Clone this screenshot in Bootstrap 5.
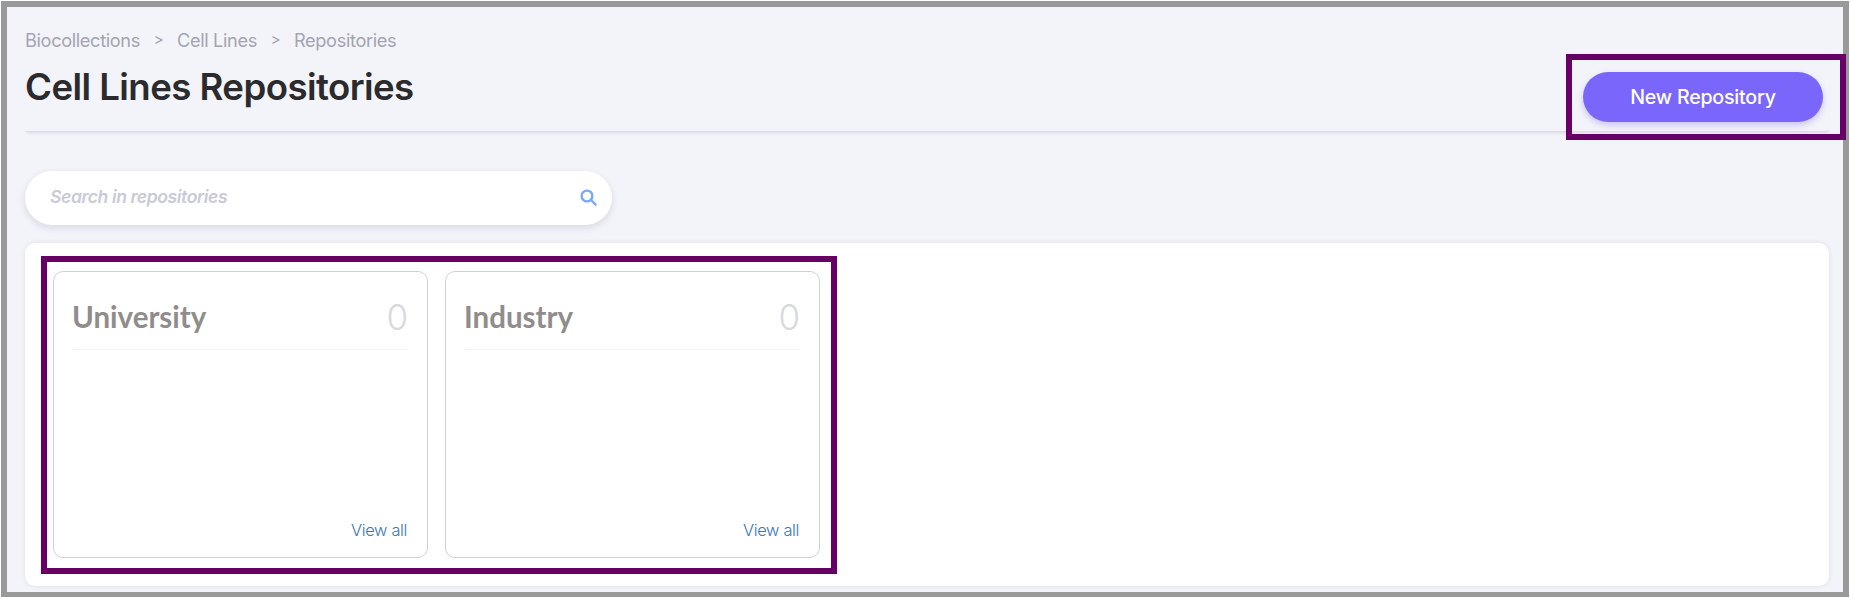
<!DOCTYPE html>
<html lang="en">
<head>
    <meta charset="UTF-8">
    <meta name="viewport" content="width=device-width, initial-scale=1.0">
    <title>Cell Lines Repositories</title>
    <link rel="stylesheet" href="https://cdn.jsdelivr.net/npm/bootstrap@5.3.0/dist/css/bootstrap.min.css">
    <style>
        html, body { height: 100%; }
        body { background: #fff; font-family: "Inter", "Liberation Sans", sans-serif; overflow: hidden; }
        .frame { position: relative; width: 1848px; height: 596px; margin: 1px 0 0 1px; border: solid #999; border-width: 6px 6px 5px 6px; background: #f3f4f9; padding: 0 14px 0 18px; }
        .page-head { height: 125px; border-bottom: 1px solid #dcdde2; box-shadow: 0 3px 3px -2px rgba(60, 60, 90, .12); }
        .crumbs { padding-top: 22px; font-size: 18.2px; line-height: 22px; color: #a3a4b1; letter-spacing: -.35px; }
        .crumb-sep { width: 37px; text-align: center; font-size: 15px; }
        .page-title { margin: 16px 0 0; font-size: 36.6px; line-height: 40px; font-weight: 600; color: #2b2a2c; letter-spacing: -.55px; }
        .new-btn { width: 240px; height: 50px; margin: 65px 6px 0 0; padding-top: 8px; border: 0; border-radius: 25px; background: #7b66fb; color: #fff; font-size: 19.6px; font-weight: 500; letter-spacing: -.2px; box-shadow: 0 3px 6px rgba(123, 102, 251, .35); }
        .btn-mark { position: absolute; left: 1559px; top: 47px; width: 280px; height: 86px; border: 6px solid #660066; pointer-events: none; }
        .search-box { width: 587px; height: 54px; margin-top: 39px; padding: 0 15px 0 25px; border-radius: 27px; background: #fff; box-shadow: 0 3px 7px rgba(60, 60, 90, .14); }
        .search-box span { margin-top: -1px; font-size: 17.6px; font-style: italic; font-weight: 600; color: #c9cad8; letter-spacing: -.4px; }
        .search-box svg { margin-top: -1px; }
        .white-panel { width: 1804px; height: 343px; margin-top: 18px; padding: 13px 16px 12px; border-radius: 10px; background: #fff; box-shadow: 0 0 5px rgba(60, 60, 90, .1); }
        .cards-mark { width: 796px; height: 318px; padding: 9px 11px 10px 6px; border: 6px solid #660066; gap: 17px; }
        .repo-card { width: 375px; height: 287px; padding: 0 19px; border: 1px solid #cfd0de; border-radius: 10px; }
        .repo-head { height: 78px; padding-top: 12px; border-bottom: 1px solid #f3f3f6; }
        .repo-name { margin-left: -1px; font-family: "Lato", "Liberation Sans", sans-serif; font-size: 29.5px; font-weight: 700; line-height: 34px; color: #918c8c; }
        .repo-count { font-size: 35px; font-weight: 300; line-height: 34px; color: #d9d9dd; }
        .view-link { margin-right: 1px; padding-bottom: 16px; font-size: 16.4px; font-weight: 300; line-height: 22px; color: #3a78ba; letter-spacing: -.35px; text-decoration: none; }
    </style>
</head>
<body>

    <div class="frame">
        <div class="page-head d-flex justify-content-between">
            <div>
                <div class="crumbs d-flex">
                    <span>Biocollections</span>
                    <span class="crumb-sep">&gt;</span>
                    <span>Cell Lines</span>
                    <span class="crumb-sep">&gt;</span>
                    <span>Repositories</span>
                </div>
                <h1 class="page-title">Cell Lines Repositories</h1>
            </div>
            <button type="button" class="btn new-btn">New Repository</button>
        </div>
        <div class="btn-mark"></div>

        <div class="search-box d-flex align-items-center justify-content-between">
            <span>Search in repositories</span>
            <svg width="17" height="17" viewBox="0 0 17 17" fill="none" stroke="#7aa9f7" stroke-width="2.4" stroke-linecap="round">
                <circle cx="7" cy="7" r="5.4"/>
                <path d="M11 11l4.6 4.6"/>
            </svg>
        </div>

        <div class="white-panel">
            <div class="cards-mark d-flex">
                <div class="card repo-card">
                    <div class="repo-head d-flex justify-content-between align-items-center">
                        <span class="repo-name">University</span>
                        <span class="repo-count">0</span>
                    </div>
                    <a href="#" class="view-link mt-auto align-self-end">View all</a>
                </div>
                <div class="card repo-card">
                    <div class="repo-head d-flex justify-content-between align-items-center">
                        <span class="repo-name">Industry</span>
                        <span class="repo-count">0</span>
                    </div>
                    <a href="#" class="view-link mt-auto align-self-end">View all</a>
                </div>
            </div>
        </div>
    </div>

    <script src="https://cdn.jsdelivr.net/npm/bootstrap@5.3.0/dist/js/bootstrap.bundle.min.js"></script>
</body>
</html>
